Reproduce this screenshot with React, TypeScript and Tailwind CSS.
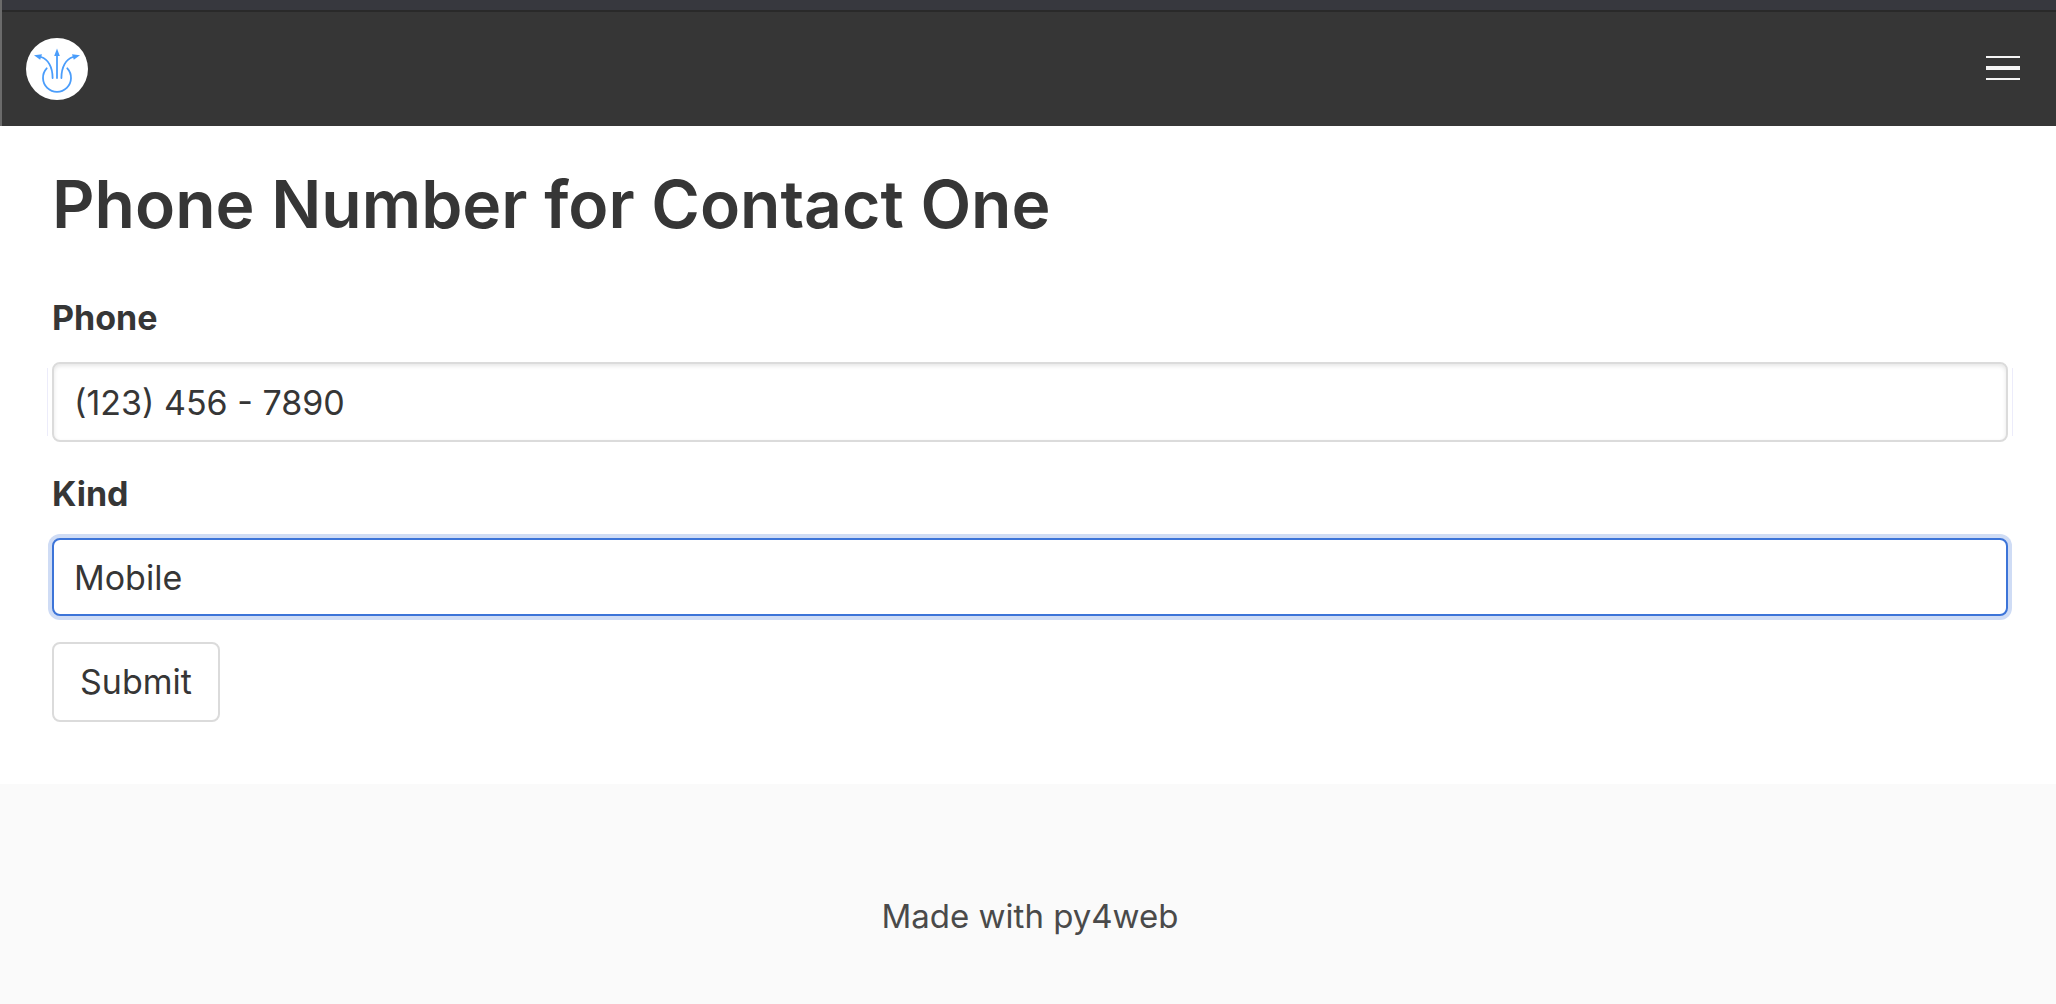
import React from 'react';

function Logo() {
  return (
    <svg viewBox="0 0 62 62" className="size-[62px]" role="img" aria-label="py4web">
      <circle cx="31" cy="31" r="31" fill="#ffffff" />
      <g fill="none" stroke="#4a9dfb" strokeWidth="1.8" strokeLinecap="round">
        <path d="M31 40V17" />
        <path d="M26.600 40C26.600 29 22 21 15 19" />
        <path d="M35.400 40C35.400 29 40 21 47 19" />
        <path d="M20.700 30.300A14 14 0 1 0 41.300 30.300" />
      </g>
      <g fill="#4a9dfb">
        <path d="M31 10.500L33.800 18H28.200Z" />
        <path d="M8 17.300L16 16.200L14.200 21.800Z" />
        <path d="M54 17.300L46 16.200L47.800 21.800Z" />
      </g>
    </svg>
  );
}

function Navbar() {
  return (
    <header className="border-l-2 border-[#6b6b6b] bg-[#363636]">
      <div className="h-3 border-b-2 border-[#292929] bg-[#37383e]" />
      <nav className="flex h-[114px] items-center justify-between pr-9 pl-6">
        <a href="#home" aria-label="Home">
          <Logo />
        </a>
        <button type="button" aria-label="Menu" className="flex w-[34px] flex-col gap-2 pb-0.5">
          <span className="h-0.5 bg-[#f5f5f5]" />
          <span className="h-1 bg-[#f5f5f5]" />
          <span className="h-0.5 bg-[#f5f5f5]" />
        </button>
      </nav>
    </header>
  );
}

export default function App() {
  return (
    <div className="flex min-h-screen flex-col bg-white font-['Inter',sans-serif] text-[34px] leading-[48px] text-[#363636]">
      <Navbar />
      <main className="pt-9 pr-12 pb-[62px] pl-[52px]">
        <h1 className="text-[66px] leading-[84px] font-semibold">Phone Number for Contact One</h1>
        <form className="mt-12" onSubmit={(e) => e.preventDefault()}>
          <label htmlFor="phone" className="block font-bold">
            Phone
          </label>
          <div className="relative mt-5">
            <span className="absolute inset-y-[6px] -inset-x-[5px] border-x border-[#ececfa]" />
            <input
              id="phone"
              type="text"
              defaultValue="(123) 456 - 7890"
              className="relative block h-20 w-full rounded-lg border-2 border-[#dbdbdb] bg-white px-5 shadow-[inset_0_2px_4px_rgba(10,10,10,0.1)] outline-none"
            />
          </div>
          <label htmlFor="kind" className="mt-7 block font-bold">
            Kind
          </label>
          <input
            id="kind"
            type="text"
            defaultValue="Mobile"
            className="mt-5 block h-[78px] w-full rounded-lg border-2 border-[#3c74d8] bg-white px-5 shadow-[0_0_0_4px_#cfdcf5] outline-none"
          />
          <button
            type="submit"
            className="mt-[26px] block h-20 rounded-lg border-2 border-[#dbdbdb] bg-white px-[26px]"
          >
            Submit
          </button>
        </form>
      </main>
      <footer className="grow bg-[#fafafa] pt-[108px] pr-12 pb-12 pl-[52px] text-center text-[33px] text-[#4a4a4a]">
        <p>Made with py4web</p>
      </footer>
    </div>
  );
}
